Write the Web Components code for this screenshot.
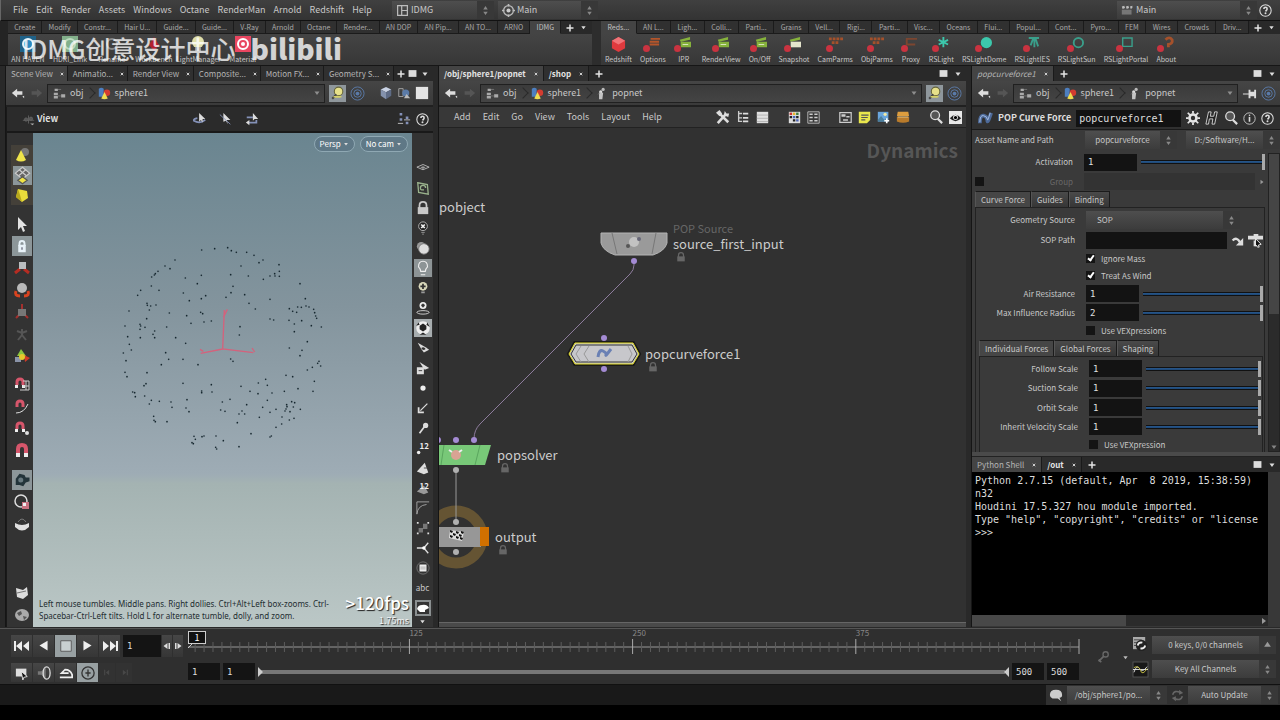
<!DOCTYPE html>
<html lang="en">
<head>
<meta charset="utf-8">
<title>Houdini</title>
<style>
  body {
    margin: 0;
    background: #000;
    color: #c8c8c8;
    font: 8px/12px "Noto Sans CJK SC", "Noto Sans", sans-serif;
  }
</style>
</head>
<body>
<hou-desktop></hou-desktop>
<script>
// All drawn on a 16x16 grid
const ICONS = {
  back: `<path fill="#ddd" d="M1 8l6-5v3h6v4h-6v3z"/><path fill="#ddd" d="M13 12l2 2v-3z"/>`,
  forward: `<path fill="#555" d="M15 8L9 3v3H3v4h6v3z"/>`,
  net: `<path fill="#aaa" d="M2 2h4v3h-4zM1 7h5v3h-5zM1 11h5v3h-5zM10 9h5v4h-5z"/><path stroke="#777" fill="none" d="M6 3h4M6 11h4"/>`,
  geo: `<path fill="#4d7fc0" d="M1 2q3-2 6 0v10h-6z"/><circle cx="11" cy="7" r="4" fill="#d33c30"/><path fill="#f0dc50" d="M8 6l4 8q-4 2-8 0z"/>`,
  pop: `<circle cx="10" cy="3" r="2" fill="#bbb"/><circle cx="7" cy="6" r="2" fill="#ddd"/><path fill="#c4c4c4" d="M5 7h5l-1 8H5z"/><path stroke="#888" d="M4 9l2-2"/>`,
  pinYellow: `<rect width="16" height="16" fill="#8f979c"/><circle cx="9" cy="6" r="4" fill="#e6e08a" stroke="#66653a"/><path stroke="#444" stroke-width="2" d="M3 13l4-4"/><ellipse cx="8" cy="11" rx="4" ry="1" fill="#d4d06a"/>`,
  rings: `<g fill="none" stroke="#5a7aa8"><circle cx="8" cy="8" r="7"/><circle cx="8" cy="8" r="4"/></g><circle cx="8" cy="8" r="2" fill="#5a7aa8"/>`,
  cube: `<path fill="#c9d2e4" d="M8 1l6 3-6 3-6-3z"/><path fill="#8492ad" d="M2 4l6 3v8l-6-4z"/><path fill="#5e6b85" d="M14 4L8 7v8l6-4z"/>`,
  shapes: `<path fill="none" stroke="#aaa" d="M2 3h5v9h-5z"/><circle cx="10" cy="8" r="4" fill="#5b7ba8"/><path fill="#bbb" d="M11 9l4 5H8z"/>`,
  square: `<rect x="1" y="1" width="14" height="14" fill="#e4e4e4"/>`,
  view: `<g stroke="#666" fill="#555"><path d="M1 9h14M8 3v10"/><circle cx="5" cy="8" r="2"/><circle cx="11" cy="7" r="2"/></g><path fill="#aaa" d="M10 13h5l-2 2z"/>`,
  tumble: `<path fill="none" stroke="#8491b8" stroke-width="2" d="M5 7q-5 1-4 3 7 4 13-1"/><path fill="#ddd" d="M7 1v10l2-2 2 3V8h3z"/>`,
  pickArrow: `<path fill="#ddd" d="M5 1l8 8H9l1 5-2-4-3 1z"/><path stroke="#8491b8" d="M1 3l12 11"/>`,
  loopArrow: `<path fill="none" stroke="#8491b8" stroke-width="2" d="M2 6h7M4 12h9v-3"/><path fill="#ddd" d="M9 1v9l2-2h4zM1 12l4-3v6z"/>`,
  handles: `<path fill="#8491b8" d="M3 1h3v3h-3zM3 7h3v3h-3zM10 5h3v3h-3zM10 11h3v3h-3z"/><path stroke="#ccc" d="M1 13h6M8 9h7"/>`,
  help: `<circle cx="8" cy="8" r="7" fill="none" stroke="#ddd" stroke-width="1.3"/><path fill="none" stroke="#ddd" stroke-width="2" d="M6 6q0-2 2-2t2 2q0 1-2 3"/><circle cx="8" cy="11.500" r="1.200" fill="#ddd"/>`,
  info: `<circle cx="8" cy="8" r="7" fill="none" stroke="#ddd"/><circle cx="8" cy="4" r="1" fill="#ddd"/><path stroke="#ddd" stroke-width="2" d="M8 6v6"/>`,
  layout: `<path fill="none" stroke="#bbb" stroke-width="1.500" d="M2 2h12v12H2zM7 2v12M7 8h7"/>`,
  mainRing: `<circle cx="8" cy="8" r="6" fill="none" stroke="#bbb" stroke-width="1.500"/><circle cx="8" cy="8" r="2.500" fill="#ccc"/><path stroke="#bbb" stroke-width="2" d="M8 0v3M8 13v3M0 8h3M13 8h3"/>`,
  clap: `<path fill="#777" d="M1 7h12v6H1z"/><path fill="#bbb" d="M1 3l3-1 1 3-3 1zM6 3l3-1 1 3-3 1zM11 3l3-1v3l-2 1z"/>`,
  updown: `<path fill="#888" d="M8 0l4 6H4zM8 16l4-6H4z"/>`,
  plus: `<path stroke="#e4e4e4" stroke-width="3" d="M8 1v14M1 8h14"/>`,
  restore: `<path fill="#ddd" d="M1 2h14v12H1z"/>`,
  down: `<path fill="#ddd" d="M3 5h10l-5 7z"/>`,
  up: `<path fill="#999" d="M2 12h12L8 3z"/>`,
  right: `<path fill="#999" d="M4 2v12l8-6z"/>`,
  close: `<path stroke="#ccc" stroke-width="4" d="M3 3l10 10M13 3l-10 10"/>`,
  tools: `<path stroke="#ddd" stroke-width="3" d="M2 15L11 5M5 5l9 9"/><path fill="#ddd" d="M0 3l4-3 3 4-3 3zM10 1l2 3 3 0-1 4-5-2z"/>`,
  tree: `<path fill="none" stroke="#ccc" stroke-width="1.500" d="M3 1v12h4M3 4h4M3 9h4"/><path fill="#ddd" d="M8 3h6v2H8zM8 8h6v2H8zM8 12h6v2H8z"/>`,
  list: `<path fill="#e0e0e0" d="M1 1h14v14H1z"/><path stroke="#aaa" d="M1 5h14M1 9h14M1 13h14"/>`,
  palette: `<path fill="#ddd" d="M1 1h14v14H1z"/><path fill="#c33" d="M2 2h3v3H2z"/><path fill="#e9b52c" d="M6 2h3v3H6z"/><path fill="#3f7d3f" d="M10 2h3v3h-3z"/><path fill="#222" d="M2 6h3v3H2zM10 6h3v3h-3zM6 10h3v3H6z"/><path fill="#4a62b4" d="M6 6h3v3H6zM10 10h3v3h-3z"/>`,
  gridList: `<path fill="none" stroke="#ccc" d="M1 1h14v14H1z"/><path fill="#ccc" d="M3 3h4v2H3zM9 3h4v2H9zM3 7h4v2H3zM9 7h4v2H9zM3 11h4v2H3zM9 11h4v2H9z"/>`,
  box: `<path fill="none" stroke="#ccc" stroke-width="1.500" d="M1 2h14v12H1z"/><path fill="#ccc" d="M3 4h5v3H3zM9 6h4v2H9zM5 10h6v2H5z"/>`,
  note: `<path fill="#e9e74d" d="M1 1h14v10l-4 4H1z"/><path stroke="#555" stroke-width="1.500" d="M4 5h9M4 8h8M4 11h5"/>`,
  image: `<path fill="#6aa6dc" d="M1 1h13v12H1z"/><path fill="#4a7f9c" d="M1 11l4-5 4 5 2-2 3 4H1z"/><circle cx="10" cy="4" r="2" fill="#f1e9a4"/><path stroke="#fff" stroke-width="2" d="M12 9v6M9 12h6"/>`,
  basket: `<path fill="#dd9d3e" d="M2 2h12l1 5H1z"/><path fill="#b97b2b" d="M1 8h14v5q-7 3-14 0z"/><path stroke="#f0cf8e" d="M2 8h12"/>`,
  search: `<circle cx="7" cy="6" r="5" fill="#555" stroke="#ddd" stroke-width="1.500"/><path stroke="#ddd" stroke-width="2.500" d="M10 10l5 5"/>`,
  eye: `<rect width="16" height="16" fill="#e8e8e8"/><path fill="#222" d="M1 9q7-9 14 0-7 7-14 0z"/><circle cx="8" cy="8" r="3" fill="#fff"/><circle cx="8" cy="8" r="2" fill="#000"/>`,
  pin: `<path fill="#ddd" d="M7 4h2v2h4V4h2v9h-2v-2H9v2H7V9H1V8h6z"/>`,
  curve: `<path fill="none" stroke="#4d6a99" stroke-width="4" d="M2 13q0-9 4-8t4 5 4-8"/><path fill="none" stroke="#a9c0e4" stroke-width="1" d="M2 12q0-8 4-7t4 4 3-7"/>`,
  gear: `<circle cx="8" cy="8" r="4" fill="none" stroke="#e4e4e4" stroke-width="3"/><path stroke="#e4e4e4" stroke-width="2" d="M8 0v3M8 13v3M0 8h3M13 8h3M2 2l3 3M11 11l3 3M14 2l-3 3M5 11l-3 3"/>`,
  hmark: `<path fill="#222" stroke="#ddd" d="M4 1h3l-1 5h4l1-5h3l-3 14H8l1-6H5l-1 6H1z"/>`,
  jump: `<path fill="none" stroke="#ddd" stroke-width="3" d="M2 8q5-5 9 2"/><path fill="#ddd" d="M15 5v9H6z"/>`,
  picker: `<path fill="#ddd" d="M0 3h16v4H0zM6 1h5v2H6zM6 8h3v6H6z"/><path fill="#111" stroke="#eee" d="M8 6l6 6-3 1 1 2-2 0-1-2-1 1z"/>`,
  lock: `<path fill="none" stroke="currentColor" stroke-width="2" d="M4 8V5q0-4 4-4t4 4v3"/><path fill="currentColor" d="M2 7h12v8H2z"/>`,
  cone: `<circle cx="11" cy="5" r="4" fill="#777"/><path fill="#efe44a" d="M7 3l5 10q-5 3-10 0z"/>`,
  mesh: `<rect width="16" height="16" fill="#8c9699"/><path fill="#666" stroke="#ccc" d="M8 1l6 5-6 5-6-5z"/><path stroke="#ccc" d="M5 3l6 5M11 3L5 8"/><path fill="#f1e444" stroke="#555" d="M8 9l4 3-4 3-4-3z"/>`,
  yellowCube: `<path fill="#e9dc3b" d="M4 2l9 2 1 7-6 4-6-5z"/><path fill="#b8a81c" d="M4 2l2 6 2 7-6-5z"/>`,
  select: `<path fill="#e2e2e2" d="M4 1l9 9H9l2 5-2 1-2-5-3 3z"/>`,
  hotLock: `<rect width="16" height="16" fill="#8c9699"/><path fill="none" stroke="#e8f2f8" stroke-width="1.500" d="M6 8V6q0-2 2-2t2 2v2"/><path fill="#e8f2f8" d="M5 7h6v6H5z"/><path stroke="#667" d="M8 9v2"/>`,
  move: `<path fill="none" stroke="#b52c22" stroke-width="3" d="M1 13l5-4M15 13l-5-4"/><path fill="#b9bdbf" d="M5 2h7v7H5z"/>`,
  rotate: `<path fill="none" stroke="#d8431f" stroke-width="3" d="M2 9q-2 5 4 5M14 9q2 5-4 5"/><circle cx="8" cy="6" r="5" fill="#b9b9b9"/>`,
  scale: `<path stroke="#a4302e" stroke-width="2" d="M8 0v5M2 14l3-3M14 14l-3-3"/><path fill="#777" d="M4 5h8v7H4z"/>`,
  pose: `<path fill="none" stroke="#555" stroke-width="2" d="M8 3v6l-4 5M8 9l4 5M3 5l5 2 5-2"/>`,
  handle: `<path fill="#8bc540" d="M7 1l5 7H3z"/><path fill="#d03a28" d="M10 7l6 3-5 4z"/><path fill="#8a93a8" d="M1 9h6v5H1z"/><circle cx="8" cy="9" r="3" fill="#e5c82d"/>`,
  magnet: `<path fill="none" stroke="#d6566b" stroke-width="4" d="M4 11V7q0-4 4-4t4 4v4"/><path fill="#eee" d="M2 11h4v4H2zM10 11h4v4h-4z"/>`,
  magnetGrid: `<path fill="none" stroke="#d6566b" stroke-width="3" d="M3 9V6q0-3 3-3t3 3v3"/><path fill="#eee" d="M1 9h3v3H1zM8 9h3v3H8z"/><path fill="none" stroke="#ccc" d="M9 5h6v9H6M12 5v9M9 10h6"/>`,
  magnetCurve: `<path fill="none" stroke="#d6566b" stroke-width="3" d="M3 9V6q0-3 3-3t3 3v3"/><path fill="none" stroke="#ddd" d="M2 15q8 0 12-9"/>`,
  magnetDot: `<path fill="none" stroke="#d6566b" stroke-width="3" d="M3 9V6q0-3 3-3t3 3v3"/><path fill="#eee" d="M1 9h3v3H1zM8 9h3v3H8z"/><circle cx="13" cy="13" r="2" fill="#ddd"/>`,
  camera: `<rect width="16" height="16" fill="#8c9699"/><path fill="#23343a" d="M3 7l3-4 4 1 1 2 3 0 0 3-3 1-2 3-3-1-3 0z"/><circle cx="7" cy="8" r="2" fill="#68797f"/>`,
  ringBox: `<circle cx="7" cy="7" r="6" fill="none" stroke="#ddd" stroke-width="1.500"/><path fill="#c97180" d="M8 8h7v7H8z"/><path fill="#eee" d="M9 9h3v3H9z"/>`,
  dome: `<path fill="#e0e0e0" d="M1 7q7 4 14 0v4q-7 7-14 0z"/><path fill="none" stroke="#777" d="M4 6q4-6 8 0"/>`,
  flag: `<path fill="#ddd" d="M2 3l7 2 4-3 1 8-5 4-6-2z"/><path stroke="#777" d="M3 8l9-2"/>`,
  disc: `<ellipse cx="8" cy="8" rx="7" ry="6" fill="#aaa"/><path fill="#555" d="M3 6l4-2 1 3-3 2zM9 9l4 1-3 3z"/>`,
  planes: `<path fill="none" stroke="#bbb" d="M1 7l7-3 7 3-7 3z"/><path fill="#999" d="M5 7l3-1 3 1-3 2z"/>`,
  swirl: `<path fill="none" stroke="#9ab28c" stroke-width="1.500" d="M2 2l11 2 1 11-11-2zM11 8q0-3-3-3T5 8t4 2"/>`,
  bulbX: `<circle cx="8" cy="6" r="5" fill="#222" stroke="#bbb"/><path stroke="#eee" stroke-width="2" d="M6 4l4 4M10 4L6 8"/><path stroke="#999" d="M6 13h4M7 15h2"/>`,
  spheres: `<circle cx="6" cy="6" r="5" fill="#999"/><circle cx="9" cy="9" r="6" fill="#ddd" stroke="#777"/>`,
  bulb: `<rect width="16" height="16" fill="#8d9496"/><path fill="none" stroke="#eee" d="M6 11q0-2-2-4 0-5 4-5t4 5q-2 2-2 4zM6 14h4"/>`,
  bulbPlus: `<circle cx="8" cy="6" r="5" fill="#d9d8bb"/><path stroke="#333" stroke-width="2" d="M8 3v6M5 6h6"/><path stroke="#999" stroke-width="2" d="M6 13h4"/>`,
  bulbShadow: `<circle cx="8" cy="5" r="4" fill="#eee"/><path stroke="#333" stroke-width="2" d="M8 3v4M6 5h4"/><ellipse cx="8" cy="13" rx="7" ry="2" fill="none" stroke="#ddd"/>`,
  ball: `<rect width="16" height="16" fill="#a7adaf"/><circle cx="8" cy="8" r="6" fill="#eee"/><path fill="#222" d="M5 6l3-2 3 2v3l-3 2-3-2zM2 6l2-3 1 2zM14 7l-2-4-1 2zM5 14l3-2 3 2z"/>`,
  eyeArrow: `<path fill="#ddd" d="M2 2l9 5 4 3-6 3-3-4z"/><path fill="#333" d="M6 8q3-2 5 1-3 3-5-1z"/>`,
  eyeBox: `<path fill="#ddd" d="M1 7h8v8H1zM4 1l11 7-5 2-3-4z"/><path stroke="#333" d="M3 11h4"/>`,
  dot: `<circle cx="8" cy="8" r="3" fill="#eee"/>`,
  normal: `<path stroke="#ddd" stroke-width="1.500" d="M5 11l8-8"/><path fill="none" stroke="#ddd" stroke-width="2" d="M3 7v6h6"/>`,
  vector: `<path stroke="#ddd" stroke-width="2" d="M4 14l6-8"/><circle cx="11" cy="5" r="3" fill="#ddd"/>`,
  twelve: `<text x="4" y="9" font-size="9" font-weight="700" fill="#eee" font-family="Noto Sans CJK SC">12</text><circle cx="3" cy="13" r="2" fill="#eee"/>`,
  prim: `<path fill="#ddd" d="M10 2l4 11-5 2-8-3z"/><path stroke="#444" d="M9 8h4"/>`,
  primTwelve: `<path fill="#999" d="M9 5l5 8-5 2-8-3z"/><text x="4" y="9" font-size="9" font-weight="700" fill="#eee" font-family="Noto Sans CJK SC">12</text>`,
  corner: `<path fill="none" stroke="#aaa" d="M1 15V1h14M1 15Q2 5 12 4"/>`,
  points: `<path fill="#ddd" d="M1 1h2v2H1zM13 1h2v2h-2zM1 13h2v2H1zM13 13h2v2h-2z"/><path fill="#777" d="M8 3h5v6H8zM3 8h5v5H3z"/>`,
  tripod: `<path stroke="#ddd" stroke-width="1.500" d="M1 8h8M9 8l5-6M9 8l5 6"/><circle cx="9" cy="8" r="2" fill="#fff"/>`,
  circleBox: `<circle cx="8" cy="8" r="7" fill="none" stroke="#777"/><path fill="#eee" d="M4 4h8v8H4z"/><path stroke="#aaa" d="M5 7h6M5 9h6"/>`,
  cloud: `<rect width="16" height="16" fill="#8a8f90"/><path fill="#333" d="M2 2h12v12H2z"/><path fill="#fff" d="M2 9q1-4 5-4 5-1 7 3l-4 2v2H5z"/>`,
  first: `<path fill="#eee" d="M0 3h2v10H0zM8 3v10L2 8zM15 3v10L9 8z"/>`,
  prev: `<path fill="#eee" d="M13 2v12L3 8z"/>`,
  stop: `<path fill="#c8cfd0" stroke="#555" d="M2 2h12v12H2z"/>`,
  play: `<path fill="#eee" d="M3 2v12l10-6z"/>`,
  last: `<path fill="#eee" d="M14 3h2v10h-2zM8 3v10l6-5zM1 3v10l6-5z"/>`,
  stepL: `<path fill="#ddd" d="M9 2v12L1 8zM11 2h3v12h-3z"/>`,
  stepR: `<path fill="#ddd" d="M7 2v12l8-6zM2 2h3v12H2z"/>`,
  flipbook: `<path fill="#ddd" d="M1 3h12v9H1z"/><path fill="#111" stroke="#eee" d="M7 6l7 6-4 1-1 3z"/>`,
  sound: `<path fill="#777" d="M1 6h4l5-5v14l-5-5H1z"/><ellipse cx="11" cy="8" rx="4" ry="7" fill="none" stroke="#ddd" stroke-width="1.500"/>`,
  loop: `<path fill="none" stroke="#eee" stroke-width="2" d="M1 13h14v-3q-2-6-8-6L3 8h8"/>`,
  clock: `<circle cx="8" cy="8" r="7" fill="none" stroke="#333" stroke-width="1.500"/><path stroke="#333" stroke-width="1.500" d="M8 4v8M5 8h6"/>`,
  dimL: `<path fill="#484848" d="M2 3h2v10H2zM11 3v10L5 8z"/>`,
  dimR: `<path fill="#484848" d="M12 3h2v10h-2zM5 3v10l6-5z"/>`,
  key: `<circle cx="11" cy="5" r="3" fill="none" stroke="#777" stroke-width="1.500"/><path stroke="#777" stroke-width="2" d="M9 7l-6 6M3 11l3 3"/>`,
  keySync: `<path fill="#aaa" d="M0 0h13v13H0z"/><path stroke="#444" d="M1 3h8M1 6h4M1 9h4"/><circle cx="9" cy="9" r="6" fill="#222"/><path fill="none" stroke="#eee" stroke-width="2" d="M5 9q1-4 5-3M13 9q-1 4-5 3"/>`,
  wave: `<rect width="16" height="16" fill="#181818" stroke="#555"/><path fill="none" stroke="#ddd" d="M0 8h16M1 11q3-9 6-4t8-2"/><path fill="none" stroke="#c6c043" d="M1 6q5-3 7 3t7-2"/>`,
  brain: `<path fill="#ccc" d="M1 8q0-6 7-6t7 6q0 3-3 3l2 4-4-3H4q-3-1-3-4z"/>`,
  refresh: `<path fill="none" stroke="#666" stroke-width="2" d="M2 7q2-6 9-3M14 9q-2 6-9 3"/><path fill="#666" d="M10 1l5 4-5 2zM6 15l-5-4 5-2z"/>`,
  rs: `<path fill="#e03a3e" d="M8 0l7 4v8l-7 4-7-4V4z"/><path fill="#f07478" d="M8 0l7 4-7 4-7-4z"/>`,
  rsOptions: `<path stroke="#b5552a" stroke-width="2" d="M6 2h10M5 5h10M5 8h10"/>`,
  rsIpr: `<path fill="#86b23c" d="M4 3l11-3v3L5 5zM5 5h11v6H5z"/><path stroke="#dde8c4" d="M7 8h6"/>`,
  rsSnap: `<path fill="#86b23c" d="M4 3l11-3v3L5 5z"/><path fill="#e4e4cc" d="M5 5h11v6H5z"/>`,
  rsParm: `<path stroke="#a5512b" stroke-width="3" d="M1 2h15M4 6h8" stroke-dasharray="3 1"/>`,
  rsProxy: `<path fill="none" stroke="#7c4630" stroke-width="2" d="M15 2H4v6h9"/>`,
  rsStar: `<path stroke="#3cc8ac" stroke-width="2" d="M10 0v11M5 3l10 5M15 3L5 8"/>`,
  rsDome: `<circle cx="10" cy="6" r="6" fill="#3cc8ac"/>`,
  rsIes: `<path stroke="#3a9f8b" stroke-width="2" d="M4 1h11M9 1L6 9M10 1v10M11 1l3 9"/>`,
  rsSun: `<circle cx="10" cy="6" r="5" fill="none" stroke="#3a9f8b" stroke-width="2"/>`,
  rsPortal: `<path fill="none" stroke="#3a9f8b" stroke-width="1.500" d="M5 1h10v9H5z"/>`,
  rsAbout: `<path fill="none" stroke="#a5512b" stroke-width="3" d="M7 3q4-4 7 0 1 4-4 5v3"/>`,
  haven: `<rect width="16" height="16" fill="#1f6289"/><circle cx="8" cy="8" r="5" fill="#2b8ac0" stroke="#e6f3fa" stroke-width="2"/>`,
  hdri: `<rect width="16" height="16" fill="#83b08b"/><circle cx="8" cy="8" r="5" fill="none" stroke="#bcdac0" stroke-width="2"/>`,
  odd: `<circle cx="8" cy="8" r="5" fill="none" stroke="#888" stroke-width="2"/>`,
  bench: `<path fill="#b3202f" d="M8 1l5 8-5 6-5-6z"/>`,
  lamp: `<circle cx="8" cy="6" r="6" fill="#e0dfaa"/><path fill="#999" d="M5 11h6v4H5z"/>`,
  material: `<rect width="16" height="16" fill="#e94660"/><circle cx="8" cy="8" r="5" fill="none" stroke="#fff" stroke-width="2"/><circle cx="8" cy="8" r="2" fill="#fff"/>`,
};

const BASE = `
  *, *::before { box-sizing: border-box; }
  :host { box-sizing: border-box; }
  button, input, select {
    font: inherit; color: inherit; margin: 0; padding: 0;
    border: 0; border-radius: 0; background: none; min-width: 0; outline: 0;
  }
  button { display: flex; align-items: center; justify-content: center; white-space: nowrap; }
  a { color: inherit; text-decoration: none; }
`;

class HouElement extends HTMLElement {
  connectedCallback() {
    if (this.shadowRoot) return;
    const template = document.createElement("template");
    template.innerHTML = `<style>${BASE}${this.styles()}</style>${this.markup()}`;
    this.attachShadow({ mode: "open" });
    this.shadowRoot.appendChild(template.content.cloneNode(true));
  }

  styles() {
    return "";
  }

  markup() {
    return "<slot></slot>";
  }

  attr(name, fallback = "") {
    return this.getAttribute(name) || fallback;
  }
}

const icon = (name, size = 14) => `<hou-icon name="${name}" size="${size}"></hou-icon>`;
const iconButton = (name, size = 14, cls = "") =>
  `<button class="${cls}" aria-label="${name}">${icon(name, size)}</button>`;

class HouIcon extends HouElement {
  styles() {
    return `
      :host { display: inline-block; flex: none; width: ${this.attr("size", 14)}px; height: ${this.attr("size", 14)}px; }
      svg { display: block; width: 100%; height: 100%; overflow: visible; }
    `;
  }
  markup() {
    return `<svg viewBox="0 0 16 16" aria-hidden="true">${ICONS[this.attr("name")] || ""}</svg>`;
  }
}
customElements.define("hou-icon", HouIcon);

// Drop-down with the up/down arrows at its right end
class HouSelect extends HouElement {
  styles() {
    return `
      :host { display: flex; align-items: center; height: 18px; background: linear-gradient(#4e4e4e, #3c3c3c); min-width: 0; }
      hou-icon { margin: 0 4px; }
      hou-icon.lead { margin: 0 0 0 4px; }
      select { appearance: none; flex: 1; height: 100%; padding: 0 var(--pad, 2px); text-align: var(--align, left); text-overflow: clip; }
      .arrows { display: flex; align-items: center; height: 100%; background: #383838; }
    `;
  }
  markup() {
    const lead = this.attr("icon") ? `<hou-icon class="lead" name="${this.attr("icon")}" size="13"></hou-icon>` : "";
    return `${lead}<select aria-label="${this.attr("label")}"><option>${this.attr("value")}</option></select>
      <span class="arrows">${icon(this.attr("arrow", "updown"), 9)}</span>`;
  }
}
customElements.define("hou-select", HouSelect);

class HouMenuBar extends HouElement {
  styles() {
    return `
      :host { display: flex; align-items: center; height: 21px; padding-left: 12px; font-size: 9px; line-height: 16px;
        background: linear-gradient(#404040, #333); border-bottom: 1px solid #111; border-left: 1px solid #666; }
      nav { display: flex; gap: 8px; }
      .desk { width: 102px; margin-left: 20px; }
      .radial { width: 100px; margin-left: 4px; }
      .take { width: 140px; margin-left: auto; }
      .help { margin: 0 8px 0 2px; }
    `;
  }
  markup() {
    const items = ["File", "Edit", "Render", "Assets", "Windows", "Octane", "RenderMan", "Arnold", "Redshift", "Help"];
    return `
      <nav>${items.map((item) => `<button>${item}</button>`).join("")}</nav>
      <hou-select class="desk" icon="layout" value="IDMG" label="Desktop"></hou-select>
      <hou-select class="radial" icon="mainRing" value="Main" label="Radial menu"></hou-select>
      <hou-select class="take" icon="clap" value="Main" label="Take"></hou-select>
      ${iconButton("help", 13, "help")}
    `;
  }
}
customElements.define("hou-menu-bar", HouMenuBar);

class HouShelf extends HouElement {
  styles() {
    return `
      :host { display: flex; flex-direction: column; height: 44px; font-size: 7px; line-height: 10px; min-width: 0; }
      .tabs { display: flex; height: 13px; background: #292929; }
      .tabs button { flex: 1 1 auto; border: 1px solid #1b1b1b; border-width: 0 1px 1px 0; color: #aaa; background: #303030; }
      .tabs .on { background: #444; border-bottom-color: #444; color: #c0c0c0; }
      .end { display: flex; align-items: center; justify-content: space-evenly; width: 31px; flex: none; }
      .tools { display: flex; gap: ${this.attr("gap", 8)}px; flex: 1; padding: 1px 0 0 ${this.attr("inset", 0)}px; background: linear-gradient(#444, #373737); }
      .tools button { flex-direction: column; gap: 2px; min-width: ${this.attr("min", 20)}px; }
      .tool { position: relative; display: flex; }
      .tool.rs::before { content: ""; position: absolute; left: -2px; bottom: 0; width: 7px; height: 7px; border-radius: 50%; background: #c93340; z-index: 1; }
    `;
  }
  markup() {
    const tabs = this.attr("tabs").split("|");
    const tools = this.attr("tools").split("|").map((tool) => tool.split(":"));
    const active = this.attr("active");
    return `
      <div class="tabs">
        ${tabs.map((tab) => `<button class="${tab === active ? "on" : ""}">${tab}</button>`).join("")}
        <span class="end">${icon("plus", 8)}${icon("down", 7)}</span>
      </div>
      <div class="tools">
        ${tools.map(([name, label]) => `
          <button><span class="tool ${name.startsWith("rs") && name !== "rs" ? "rs" : ""}">${icon(name, this.attr("icon-size", 14))}</span>${label}</button>
        `).join("")}
      </div>
    `;
  }
}
customElements.define("hou-shelf", HouShelf);

class HouTabs extends HouElement {
  styles() {
    const fill = this.hasAttribute("fill");
    return `
      :host { display: flex; height: 15px; background: #292929; line-height: 14px; flex: none; }
      .tabs { display: flex; min-width: 0; flex: ${fill ? "1" : "0 1 auto"}; }
      .tab { display: flex; align-items: center; justify-content: space-between; flex: 1 1 auto; gap: ${fill ? 3 : 8}px;
        padding: 0 ${fill ? 3 : 5}px 0 5px; border-right: 1px solid #1a1a1a; background: #303030; color: #b4b4b4; }
      .on { background: #444; }
      :host([italic]) .tab { font-style: italic; }
      .b { font-weight: 700; color: #e4e4e4; }
      .plus { width: ${fill ? 14 : 20}px; }
      .end { display: flex; align-items: center; gap: ${fill ? 4 : 6}px; margin-left: auto; padding-right: 4px; }
    `;
  }
  markup() {
    return `
      <div class="tabs">
        ${this.attr("tabs").split("|").map((tab, i) => `
          <div class="tab ${i === 0 ? "on" : ""} ${tab[0] === "/" ? "b" : ""}"><button>${tab}</button>${iconButton("close", 4)}</div>
        `).join("")}
      </div>
      ${iconButton("plus", 8, "plus")}
      <span class="end">${iconButton("restore", 9)}${iconButton("down", 8)}</span>
    `;
  }
}
customElements.define("hou-tabs", HouTabs);

class HouPath extends HouElement {
  styles() {
    return `
      :host { display: flex; align-items: center; gap: 4px; height: 26px; flex: none; padding: 0 4px 0 5px; font-size: 9px;
        background: linear-gradient(#454545, #3a3a3a); border-bottom: 2px solid #202020; }
      .trail { display: flex; align-items: center; flex: 1; height: 19px; border: 1px solid #202020; background: linear-gradient(#3b3b3b, #444); min-width: 0; }
      .crumb { display: flex; align-items: center; gap: 4px; height: 100%; padding: 0 7px 0 5px; }
      .crumb + .crumb::before { content: ""; width: 8px; height: 8px; border: 1px solid #2a2a2a; border-width: 1px 1px 0 0; transform: rotate(45deg); margin-left: -10px; }
      .trail > hou-icon { margin: 0 3px 0 auto; opacity: 0.500; }
      ::slotted(span) { width: 6px; }
    `;
  }
  markup() {
    return `
      ${iconButton("back", 14)}${iconButton("forward", 14)}
      <div class="trail">
        ${this.attr("path").split("|").map((part) => {
          const [name, label] = part.split(":");
          return `<a class="crumb" href="#${label}">${icon(name, 13)}${label}</a>`;
        }).join("")}
        ${icon("down", 8)}
      </div>
      <slot></slot>
    `;
  }
}
customElements.define("hou-path", HouPath);

const DOTS = "275,60 314,56 353,53 364,62 379,67 410,67 432,76 459,90 447,98 195,90 165,108 180,116 144,124 136,131 133,135 125,141 226,144 262,161 274,136 362,134 393,108 415,138 460,148 480,138 494,131 495,138 507,104 508,124 508,139 570,161 124,168 92,181 83,196 147,181 220,189 238,212 274,206 287,197 348,202 363,188 369,169 404,194 417,220 436,237 480,208 586,206 538,236 548,244 563,231 574,232 588,228 597,231 611,238 614,248 617,258 620,265 560,247 111,220 112,226 122,228 138,225 118,240 110,266 57,243 178,249 230,257 272,247 278,251 243,280 282,276 304,273 390,290 388,315 480,267 491,270 537,271 553,282 575,272 553,305 604,287 634,291 592,335 45,288 90,283 92,288 105,292 90,298 91,323 134,303 129,313 134,323 170,291 197,323 227,340 53,320 58,343 64,360 40,369 48,392 167,368 176,388 154,404 219,388 264,404 362,387 369,394 538,354 576,361 570,377 623,400 627,394 632,408 607,412 592,420 45,427 51,440 111,428 108,461 102,467 68,486 74,488 76,500 104,498 219,460 304,464 306,486 275,483 275,488 393,469 420,484 445,459 467,448 472,466 486,489 444,491 523,484 528,436 548,440 564,476 613,454 609,484 118,522 124,511 148,514 183,516 186,532 231,509 228,534 237,545 337,516 360,508 410,524 332,540 345,544 387,552 396,543 404,552 382,578 458,532 472,511 448,562 480,547 498,538 530,524 531,530 528,537 545,515 554,518 550,531 525,543 540,545 571,538 516,561 538,570 552,565 515,582 498,592 484,618 480,621 423,611 131,559 132,571 136,575 171,575 252,619 256,628 246,638 250,641 276,620 282,618 318,618 340,632 387,650 317,652 320,657";

class HouSceneView extends HouElement {
  styles() {
    return `
      :host { display: flex; flex-direction: column; flex: 1; min-height: 0; }
      .head { display: flex; align-items: center; height: 26px; flex: none; padding: 0 4px 0 15px; background: #2b2b2b; border: 1px solid #191919; border-width: 0 0 2px 1px; color: #ddd; }
      .head b { font-size: 9px; margin: 0 auto 0 2px; }
      .picks { display: flex; gap: 12px; margin-right: 138px; }
      .tail { display: flex; gap: 5px; }
      .body { display: flex; flex: 1; min-height: 0; }
      .bar { display: flex; flex-direction: column; flex: none; overflow: hidden; background: #333; }
      .bar button { flex: none; }
      .left { width: 27px; padding: 12px 0 1px 4px; border-left: 1px solid #191919; }
      .left button { height: 22px; }
      .left .s { height: 20px; background: #444039; }
      .left .gap { margin-top: 8px; }
      .left .gap2 { margin-top: 6px; }
      .left .gap3 { margin-top: 8px; }
      .left .end { margin-top: auto; }
      .right { width: 21px; padding-top: 25px; align-items: center; }
      .right button { height: 20px; }
      .scene { position: relative; flex: 1; overflow: hidden; min-width: 0;
        background: linear-gradient(#6a8590 0%, #83949d 35%, #9eacb5 69%, #a4b3b2 71%, #bbc7c6 100%); }
      .cams { display: flex; justify-content: flex-end; gap: 5px; padding: 3px 4px; }
      .cams button { gap: 2px; height: 16px; padding: 0 5px; border: 1px solid #8fa8b3; border-radius: 8px; color: #fff; background: #5f7886; }
      .cloud { position: absolute; left: 77px; top: 97px; width: 230px; height: 230px; }
      .hint { position: absolute; left: 6px; bottom: 5px; margin: 0; color: #222c30; white-space: pre; font-family: "Noto Sans", sans-serif; }
      .fps { position: absolute; right: 3px; bottom: 14px; color: #fff; font-size: 17px; line-height: 20px; font-weight: 500; text-shadow: 1px 1px 1px #222; }
      .ms { position: absolute; right: 3px; bottom: 0; color: #f4f4f4; font-size: 9px; text-shadow: 1px 1px 1px #222; }
    `;
  }
  markup() {
    const left = [
      ["cone", "s"], ["mesh", "s"], ["yellowCube", "s"], ["select", "gap"], ["hotLock"], ["move"], ["rotate"], ["scale"], ["pose"], ["handle"],
      ["magnetGrid", "gap2"], ["magnetCurve"], ["magnetDot"], ["magnet"], ["camera", "gap3"], ["ringBox"], ["dome"], ["flag", "end"], ["disc"],
    ];
    const right = ["planes", "swirl", "lock", "bulbX", "spheres", "bulb", "bulbPlus", "bulbShadow", "ball", "eyeArrow", "eyeBox", "dot",
      "normal", "vector", "twelve", "prim", "primTwelve", "corner", "points", "tripod", "circleBox", "abc", "cloud"];
    const big = { camera: 20, hotLock: 20, mesh: 19, bulb: 18, ball: 18, cloud: 16 };
    const dots = DOTS.split(" ").map((dot) => {
      const [x, y] = dot.split(",");
      return `<circle cx="${x}" cy="${y}" r="2.500"/>`;
    }).join("");
    return `
      <div class="head">
        ${icon("view", 13)}<b>View</b>
        <span class="picks">${iconButton("tumble")}${iconButton("pickArrow")}${iconButton("loopArrow")}</span>
        <span class="tail">${iconButton("handles", 14)}${iconButton("help", 13)}</span>
      </div>
      <div class="body">
        <div class="bar left">${left.map(([name, cls]) => iconButton(name, big[name] || 16, cls)).join("")}</div>
        <div class="scene">
          <div class="cams"><button>Persp ${icon("down", 6)}</button><button>No cam ${icon("down", 6)}</button></div>
          <svg class="cloud" viewBox="0 0 690 690">
            <g fill="#15262e">${dots}</g>
            <path d="M343 240L338 357L430 368M338 357L272 370M340 262l12-24M270 358l10 6M426 354l8 12" fill="none" stroke="#d4627c" stroke-width="4"/>
          </svg>
          <p class="hint">Left mouse tumbles. Middle pans. Right dollies. Ctrl+Alt+Left box-zooms. Ctrl-
Spacebar-Ctrl-Left tilts. Hold L for alternate tumble, dolly, and zoom.</p>
          <span class="fps">&gt;120fps</span>
          <span class="ms">1.75ms</span>
        </div>
        <div class="bar right">${right.map((name) => name === "abc" ? "<button>abc</button>" : iconButton(name, big[name] || 14)).join("")}${icon("down", 7)}</div>
      </div>
    `;
  }
}
customElements.define("hou-scene-view", HouSceneView);

// Name beside a node, with the lock badge under it
class HouNodeLabel extends HouElement {
  styles() {
    return `
      :host { position: absolute; color: #ccc; font-size: 13px; line-height: 17px; white-space: nowrap; }
      .kind { font-size: 11px; line-height: 13px; color: #666; display: block; }
      .lock { display: block; height: 12px; margin-left: 3px; color: #666; line-height: 10px; }
    `;
  }
  markup() {
    const kind = this.attr("kind");
    return `${kind ? `<span class="kind">${kind}</span>` : ""}<slot></slot>
      ${this.hasAttribute("plain") ? "" : `<span class="lock">${icon("lock", 10)}</span>`}`;
  }
}
customElements.define("hou-node-label", HouNodeLabel);

class HouNetwork extends HouElement {
  styles() {
    return `
      :host { display: flex; flex-direction: column; flex: 1; min-height: 0; }
      .menu { display: flex; align-items: center; height: 21px; flex: none; padding: 0 4px 0 15px; font-size: 9px; background: #383838; border-bottom: 1px solid #222; }
      nav { display: flex; gap: 12px; }
      .icons { display: flex; gap: 6px; margin-left: auto; }
      .icons .g { margin-left: 13px; }
      .canvas { position: relative; flex: 1; overflow: hidden; background: #313131; }
      svg { position: absolute; left: 0; top: 0; width: 530px; height: 495px; }
      h2 { position: absolute; right: 8px; top: 9px; margin: 0; font-size: 19px; line-height: 26px; font-weight: 700; color: #565656; }
      .foot { height: 5px; flex: none; background: #4a4a4a; border-top: 1px solid #666; }
    `;
  }
  markup() {
    const menus = ["Add", "Edit", "Go", "View", "Tools", "Layout", "Help"];
    return `
      <div class="menu">
        <nav>${menus.map((menu) => `<button>${menu}</button>`).join("")}</nav>
        <span class="icons">
          ${iconButton("tools", 14)}${iconButton("tree", 14)}${iconButton("list", 13)}
          ${iconButton("palette", 13, "g")}${iconButton("gridList", 13)}
          ${iconButton("box", 13, "g")}${iconButton("note", 13)}${iconButton("image", 13)}${iconButton("basket", 14)}
          ${iconButton("search", 14, "g")}${iconButton("eye", 13)}
        </span>
      </div>
      <div class="canvas">
        <svg viewBox="439 128 530 495">
          <circle cx="456" cy="537" r="26" fill="none" stroke="#655433" stroke-width="11"/>
          <path d="M634 261v4q0 5-4 9L480 424q-6 6-6 15" fill="none" stroke="#8d7c9c"/>
          <path d="M456 470v52" stroke="#999"/>
          <path d="M601 233h66v10q-2 8-14 12h-38q-12-4-14-12z" fill="#9a9a9a" stroke="#b4b4b4"/>
          <path d="M612 233l5 21M656 233l-4 21" stroke="#777"/>
          <circle cx="634" cy="242" r="5" fill="#c2c2c2"/><circle cx="628" cy="246" r="2" fill="#555"/><circle cx="639" cy="239" r="2" fill="#667"/>
          <path d="M575 343h58l6 11-6 10h-58l-6-10z" fill="#c7c7cb" stroke="#1a1a1a" stroke-width="4"/>
          <path d="M575 343h58l6 11-6 10h-58l-6-10z" fill="#c7c7cb" stroke="#e3dc24"/>
          <path d="M576 345h56l5 9-5 8h-56l-5-8z" fill="none" stroke="#333"/>
          <path d="M581 346l-5 8 5 8M589 346l-5 8 5 8M628 346l4 8-4 8" fill="none" stroke="#999"/>
          <path d="M598 357q1-8 5-6t3 4 5-6" fill="none" stroke="#6a80b4" stroke-width="3"/>
          <path d="M439 445h52l-6 20h-46z" fill="#78c878"/><path d="M444 445l-3 20M480 445l-5 20" stroke="#5aa55e"/>
          <circle cx="456" cy="455" r="5" fill="#d8a393"/><path d="M449 450l3 2M462 450l-3 2" stroke="#eee" stroke-width="2"/>
          <path d="M439 527h42v20h-42z" fill="#979797"/><path d="M480 527h9v19h-9z" fill="#d07000"/>
          <g transform="translate(450 529)"><path fill="#ddd" d="M0 1l14 2-2 9-13-3z"/><path fill="#111" d="M0 1l3 1-1 2-2-1zM6 2l3 1-1 2-2-1zM11 2l3 1-1 2-2-1zM3 4l3 1-1 2-2-1zM9 5l3 1-1 2-2-1zM0 6l3 1-1 2-2-1zM6 7l3 1-1 2-2-1zM10 8l3 1-1 2-2-1z"/></g>
          <g fill="#a48bd4"><circle cx="634" cy="261" r="3"/><circle cx="604" cy="338" r="3"/><circle cx="604" cy="369" r="3"/><circle cx="456" cy="440" r="3"/><circle cx="474" cy="440" r="3"/><circle cx="438" cy="440" r="3"/></g>
          <g fill="#b0b0b0"><circle cx="456" cy="470" r="3"/><circle cx="456" cy="522" r="3"/><circle cx="456" cy="552" r="3"/></g>
        </svg>
        <h2>Dynamics</h2>
        <hou-node-label plain style="left: 0; top: 70px">pobject</hou-node-label>
        <hou-node-label kind="POP Source" style="left: 234px; top: 94px">source_first_input</hou-node-label>
        <hou-node-label style="left: 206px; top: 217px">popcurveforce1</hou-node-label>
        <hou-node-label style="left: 58px; top: 318px">popsolver</hou-node-label>
        <hou-node-label style="left: 56px; top: 400px">output</hou-node-label>
      </div>
      <div class="foot"></div>
    `;
  }
}
customElements.define("hou-network", HouNetwork);

// One parameter: kind is slider, check, menu, path or group
class HouParm extends HouElement {
  styles() {
    return `
      :host { display: grid; grid-template-columns: var(--label, 98px) minmax(0, 1fr); column-gap: 11px; align-items: center; height: 19px; }
      :host([kind="check"]) { height: 17px; }
      :host([kind="menu"]), :host([kind="path"]), :host([tall]) { height: 20px; }
      :host([disabled]) { color: #686868; }
      .name { text-align: right; white-space: nowrap; }
      .field { display: flex; align-items: center; gap: 4px; }
      .text { width: 53px; height: 17px; padding: 0 4px; background: #131313; color: #e0e0e0; font: 9px "DejaVu Sans Mono", monospace; }
      .wide { flex: 1; }
      input[type="range"] { appearance: none; flex: 1; height: 16px; background: linear-gradient(#111 1px, #29588c 1px, #1d4775 3px, #111 3px) 0 50% / 100% 4px no-repeat; }
      input[type="range"]::-webkit-slider-thumb { appearance: none; width: 3px; height: 16px; background: #aaa; }
      input[type="checkbox"] { appearance: none; width: 9px; height: 9px; background: #141414; display: grid; }
      input[type="checkbox"]:checked::before { content: ""; width: 4px; height: 7px; margin-left: 3px; border: solid #fff; border-width: 0 2px 2px 0; transform: rotate(35deg); }
      .group { display: flex; justify-content: space-between; align-items: center; }
      .group + .field .text { background: #333; }
      hou-select { --pad: 11px; width: 154px; }
      .field label { margin-left: 2px; }
    `;
  }
  markup() {
    const label = this.attr("label");
    const value = this.attr("value");
    switch (this.attr("kind")) {
      case "check":
        return `<span></span><span class="field"><input id="p" type="checkbox" ${this.hasAttribute("checked") ? "checked" : ""}><label for="p">${label}</label></span>`;
      case "menu":
        return `<span class="name">${label}</span><span class="field"><hou-select value="${value}" label="${label}"></hou-select></span>`;
      case "path":
        return `<label class="name" for="p">${label}</label><span class="field"><input id="p" class="text wide">${iconButton("jump", 13)}${iconButton("picker", 15)}</span>`;
      case "group":
        return `<span class="group"><input type="checkbox" aria-label="Enable group"><label for="p">${label}</label></span>
          <span class="field"><input id="p" class="text wide" disabled>${icon("right", 6)}</span>`;
      default:
        return `<label class="name" for="p">${label}</label><span class="field">
          <input id="p" class="text" value="${value}"><input type="range" min="0" max="1" value="1" aria-label="${label}"></span>`;
    }
  }
}
customElements.define("hou-parm", HouParm);

class HouFolder extends HouElement {
  styles() {
    return `
      :host { display: block; }
      .tabs { display: flex; }
      .tabs button { height: 16px; padding: 0 5px; border: 1px solid #1b1b1b; border-left-color: #555; border-bottom: 0; background: linear-gradient(#4a4a4a, #363636); }
      .tabs button:first-child { background: #464646; }
      .page { border: 1px solid #222; border-width: 1px 1px 0 1px; padding: 2px 1px 0 0; }
    `;
  }
  markup() {
    return `<div class="tabs">${this.attr("tabs").split("|").map((tab) => `<button>${tab}</button>`).join("")}</div>
      <div class="page"><slot></slot></div>`;
  }
}
customElements.define("hou-folder", HouFolder);

class HouParameters extends HouElement {
  styles() {
    return `
      :host { display: flex; flex-direction: column; flex: 1 1 0; min-height: 0; background: #3a3a3a; }
      .head { display: flex; align-items: center; gap: 5px; height: 23px; flex: none; padding: 0 6px; background: #303030; border-bottom: 1px solid #1a1a1a; color: #ddd; }
      .head b { font-size: 9px; white-space: nowrap; }
      .head input { flex: 1; height: 17px; padding: 0 3px; background: #121212; font: 10px "DejaVu Sans Mono", monospace; }
      .asset { display: flex; align-items: center; height: 20px; flex: none; padding-left: 3px; }
      .asset span { flex: 1; white-space: nowrap; }
      .asset hou-select { --align: center; width: 92px; margin-right: 9px; }
      .asset hou-select + hou-select { width: 94px; margin-right: 0; }
      .scroll { display: flex; flex: 1; min-height: 0; overflow: hidden; }
      .list { flex: 1; padding: 2px 3px 0 3px; min-width: 0; }
      .bar { display: flex; flex-direction: column; align-items: center; justify-content: space-between; width: 12px; margin-top: 3px; background: #2b2b2b; border: 1px solid #222; }
      .bar i { width: 100%; height: 160px; background: #454545; }
      .bar hou-icon { opacity: 0.500; }
      hou-folder { --label: 99px; }
      hou-folder hou-folder { margin: 1px 0 0 3px; --label: 98px; }
    `;
  }
  markup() {
    return `
      <div class="head">
        ${icon("curve", 15)}<b>POP Curve Force</b><input value="popcurveforce1" aria-label="Node name">
        ${iconButton("gear", 14)}${iconButton("hmark", 14)}${iconButton("search", 14)}${iconButton("info", 13)}${iconButton("help", 13)}
      </div>
      <div class="asset"><span>Asset Name and Path</span>
        <hou-select value="popcurveforce" label="Asset name"></hou-select><hou-select value="D:/Software/H..." label="Asset path"></hou-select>
      </div>
      <div class="scroll">
        <div class="list">
          <hou-parm tall label="Activation" value="1"></hou-parm>
          <hou-parm kind="group" disabled label="Group"></hou-parm>
          <hou-folder tabs="Curve Force|Guides|Binding">
            <hou-parm kind="menu" label="Geometry Source" value="SOP"></hou-parm>
            <hou-parm kind="path" label="SOP Path"></hou-parm>
            <hou-parm kind="check" checked label="Ignore Mass"></hou-parm>
            <hou-parm kind="check" checked label="Treat As Wind"></hou-parm>
            <hou-parm label="Air Resistance" value="1"></hou-parm>
            <hou-parm label="Max Influence Radius" value="2"></hou-parm>
            <hou-parm kind="check" label="Use VEXpressions"></hou-parm>
            <hou-folder tabs="Individual Forces|Global Forces|Shaping">
              <hou-parm label="Follow Scale" value="1"></hou-parm>
              <hou-parm tall label="Suction Scale" value="1"></hou-parm>
              <hou-parm label="Orbit Scale" value="1"></hou-parm>
              <hou-parm label="Inherit Velocity Scale" value="1"></hou-parm>
              <hou-parm kind="check" label="Use VEXpression"></hou-parm>
            </hou-folder>
          </hou-folder>
        </div>
        <div class="bar"><i></i>${icon("down", 8)}</div>
      </div>
    `;
  }
}
customElements.define("hou-parameters", HouParameters);

class HouConsole extends HouElement {
  styles() {
    return `
      :host { display: block; flex: none; height: 155px; padding-right: 12px; background: #383838; }
      pre { height: 143px; margin: 0; padding: 2px 3px; overflow: hidden; background: #000; color: #ddd; font: 10px/13px "DejaVu Sans Mono", monospace; }
      .bar { display: flex; justify-content: space-between; align-items: center; height: 11px; background: #2b2b2b; }
      .bar i { width: 154px; height: 100%; background: #484848; }
    `;
  }
  markup() {
    return `<pre><slot></slot></pre><div class="bar"><i></i>${icon("right", 8)}</div>`;
  }
}
customElements.define("hou-console", HouConsole);

class HouTimeline extends HouElement {
  styles() {
    return `
      :host { display: grid; grid-template-columns: 177px minmax(0, 1fr) 201px; height: 56px; padding-left: 11px; background: #2f2f2f; border-top: 1px solid #555; }
      .play, .opts { display: flex; align-items: center; height: 27px; gap: 1px; padding-top: 6px; }
      .play button, .opts button { width: 21px; height: 22px; background: linear-gradient(#464646, #363636); }
      .opts button { height: 19px; }
      .play .on, .opts .on { background: #98a0a2; }
      .play .thin { width: 10px; }
      .opts .off { background: #323232; width: 16px; }
      input { background: #141414; color: #ddd; font: 9px "DejaVu Sans Mono", monospace; padding: 0 4px; }
      .play input { width: 38px; height: 22px; margin-left: 2px; }
      .track { position: relative; height: 29px; }
      .track svg { position: absolute; inset: 0; width: 100%; height: 100%; overflow: visible; }
      .track span { position: absolute; top: 0; color: #888; line-height: 8px; }
      .head { position: absolute; left: 0; top: 2px; width: 18px; height: 13px; border: 1px solid #ccc; background: #111; color: #fff; font-size: 9px; line-height: 11px; text-align: center; }
      .range { display: flex; align-items: center; height: 27px; gap: 3px; }
      .range input { width: 32px; height: 17px; }
      .range svg { flex: 1; height: 10px; min-width: 0; }
      .keys { display: grid; grid-template-columns: 42px 15px minmax(0, 1fr); gap: 5px 4px; align-items: center; padding: 6px 4px 6px 8px; }
      .keys hou-select { --align: center; width: auto; }
      .keyer { grid-row: span 2; display: flex; gap: 12px; align-items: center; justify-content: flex-end; opacity: 0.800; }
    `;
  }
  markup() {
    const ticks = [];
    for (let frame = 5; frame <= 500; frame += 5) {
      const x = ((frame - 1) / 499) * 100;
      const major = frame % 125 === 0;
      ticks.push(`<line x1="${x}%" x2="${x}%" y1="${major ? 10 : 13}" y2="${major ? 25 : 23}" stroke="${major ? "#aaa" : "#5c5c5c"}"/>`);
    }
    const labels = [125, 250, 375].map((frame) => `<span style="left: ${((frame - 1) / 499) * 100}%">${frame}</span>`);
    return `
      <div>
        <div class="play">
          ${iconButton("first", 16)}${iconButton("prev", 13)}${iconButton("stop", 14, "on")}${iconButton("play", 13)}${iconButton("last", 16)}
          <input value="1" aria-label="Current frame">${iconButton("stepL", 8, "thin")}${iconButton("stepR", 8, "thin")}
        </div>
        <div class="opts">
          ${iconButton("flipbook", 14)}${iconButton("sound", 14)}${iconButton("loop", 14)}${iconButton("clock", 14, "on")}
          ${iconButton("dimL", 9, "off")}${iconButton("dimR", 9, "off")}
        </div>
      </div>
      <div>
        <div class="track">
          <svg><line x1="0" x2="100%" y1="18" y2="18" stroke="#999"/>${ticks.join("")}<path d="M0 19l5-5" stroke="#ccc"/></svg>
          ${labels.join("")}
          <div class="head">1</div>
        </div>
        <div class="range">
          <input value="1" aria-label="Global start"><input value="1" aria-label="Range start">
          <svg viewBox="0 0 754 10" preserveAspectRatio="none"><path fill="#777" d="M2 3h748v4H2z"/><path fill="#ccc" d="M0 0l5 5-5 5zM754 0l-5 5 5 5z"/></svg>
          <input value="500" aria-label="Range end"><input value="500" aria-label="Global end">
        </div>
      </div>
      <div class="keys">
        <span class="keyer">${iconButton("key", 14)}${iconButton("down", 7)}</span>
        ${iconButton("keySync", 15)}<hou-select value="0 keys, 0/0 channels" arrow="up" label="Keys"></hou-select>
        ${iconButton("wave", 15)}<hou-select value="Key All Channels" label="Key mode"></hou-select>
      </div>
    `;
  }
}
customElements.define("hou-timeline", HouTimeline);

class HouStatus extends HouElement {
  styles() {
    return `
      :host { display: flex; align-items: center; justify-content: flex-end; height: 21px; background: #191919; border-top: 1px solid #111; }
      .group { display: flex; align-items: center; gap: 4px; height: 100%; padding: 0 2px 0 3px; background: #303030; }
      hou-select { --align: center; --pad: 0px; width: 100px; }
      hou-select + button + hou-select { width: 90px; }
    `;
  }
  markup() {
    return `<div class="group">${icon("brain", 14)}<hou-select value="/obj/sphere1/po..." label="Simulation"></hou-select>${iconButton("refresh", 13)}<hou-select value="Auto Update" label="Update mode"></hou-select></div>`;
  }
}
customElements.define("hou-status", HouStatus);

class HouDesktop extends HouElement {
  styles() {
    return `
      :host { display: grid; grid-template-rows: auto auto minmax(0, 1fr) auto auto; height: 100vh; min-height: 640px; padding-bottom: 15px; background: #000; position: relative; }
      .shelves { display: grid; grid-template-columns: minmax(0, 584fr) 9px minmax(0, 679fr); padding-left: 8px; background: #242424; border-bottom: 1px solid #161616; }
      .grip { background: #2d2d2d; }
      .panes { display: grid; grid-template-columns: minmax(0, 428fr) minmax(0, 528fr) minmax(0, 309fr); gap: 5px; padding: 0 0 1px 5px; background: #292929; min-height: 0; }
      .pane { display: flex; flex-direction: column; min-height: 0; min-width: 0; border-left: 1px solid #151515; }
      .split { height: 5px; flex: none; background: #4a4a4a; border-bottom: 1px solid #222; }
      .mark { position: absolute; left: 22px; top: 30px; display: flex; align-items: center; gap: 15px; color: #fff; opacity: 0.780; font-size: 25px; line-height: 36px; font-weight: 500; pointer-events: none; white-space: nowrap; }
      .mark b { font-size: 28px; font-weight: 900; }
    `;
  }
  markup() {
    return `
      <hou-menu-bar></hou-menu-bar>
      <div class="shelves">
        <hou-shelf active="IDMG" icon-size="16" gap="2" min="40"
          tabs="Create|Modify|Constr...|Hair U...|Guide...|Guide...|V-Ray|Arnold|Octane|Render...|AN DOP|AN Pip...|AN TO...|ARNO|IDMG"
          tools="haven:AN HAVEN|hdri:HDRI_Link|odd:Rename|bench:Workbench|lamp:LightManager|material:Material"></hou-shelf>
        <div class="grip"></div>
        <hou-shelf active="Reds..." icon-size="15" inset="4"
          tabs="Reds...|AN L...|Ligh...|Colli...|Parti...|Grains|Vell...|Rigi...|Parti...|Visc...|Oceans|Flui...|Popul...|Cont...|Pyro...|FEM|Wires|Crowds|Driv..."
          tools="rs:Redshift|rsOptions:Options|rsIpr:IPR|rsIpr:RenderView|rsIpr:On/Off|rsSnap:Snapshot|rsParm:CamParms|rsParm:ObjParms|rsProxy:Proxy|rsStar:RSLight|rsDome:RSLightDome|rsIes:RSLightIES|rsSun:RSLightSun|rsPortal:RSLightPortal|rsAbout:About"></hou-shelf>
      </div>
      <div class="panes">
        <div class="pane">
          <hou-tabs fill tabs="Scene View|Animatio...|Render View|Composite...|Motion FX...|Geometry S..."></hou-tabs>
          <hou-path path="net:obj|geo:sphere1">${icon("pinYellow", 17)}${icon("rings", 15)}<span></span>${icon("cube", 14)}${icon("shapes", 14)}${icon("square", 14)}</hou-path>
          <hou-scene-view></hou-scene-view>
        </div>
        <div class="pane">
          <hou-tabs tabs="/obj/sphere1/popnet|/shop"></hou-tabs>
          <hou-path path="net:obj|geo:sphere1|pop:popnet">${icon("pinYellow", 17)}${icon("rings", 15)}</hou-path>
          <hou-network></hou-network>
        </div>
        <div class="pane">
          <hou-tabs italic tabs="popcurveforce1"></hou-tabs>
          <hou-path path="net:obj|geo:sphere1|pop:popnet">${icon("pin", 15)}${icon("rings", 15)}</hou-path>
          <hou-parameters></hou-parameters>
          <div class="split"></div>
          <hou-tabs tabs="Python Shell|/out"></hou-tabs>
          <hou-console>Python 2.7.15 (default, Apr  8 2019, 15:38:59)
n32
Houdini 17.5.327 hou module imported.
Type "help", "copyright", "credits" or "license
&gt;&gt;&gt;</hou-console>
        </div>
      </div>
      <hou-timeline></hou-timeline>
      <hou-status></hou-status>
      <div class="mark"><span>IDMG创意设计中心</span><b>bilibili</b></div>
    `;
  }
}
customElements.define("hou-desktop", HouDesktop);
</script>
</body>
</html>
